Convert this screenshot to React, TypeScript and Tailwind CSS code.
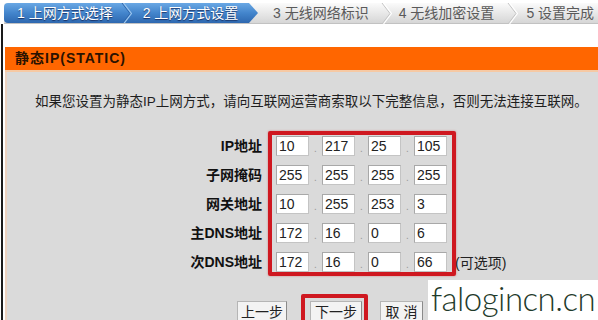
import React from "react";

const Chevron = ({ light, dark }: { light: string; dark: string }) => (
  <svg width="11" height="21" viewBox="0 0 11 21" className="shrink-0">
    <polyline points="1,0 9,10.5 1,21" fill="none" stroke={dark} strokeWidth="1" />
    <polyline points="2.5,0 10.5,10.5 2.5,21" fill="none" stroke={light} strokeWidth="1.2" />
  </svg>
);

const Field = ({ v }: { v: string }) => (
  <div className="w-[33px] h-[20px] bg-white border border-[#c4c4c4] border-t-[#a8a8a8] border-l-[#a8a8a8] pl-[2px] text-[14px] leading-[18px] text-[#222] font-['Liberation_Sans',sans-serif]">
    {v}
  </div>
);

const Dot = () => (
  <div className="w-[13px] h-[20px] flex items-end justify-center pb-[2px] text-[10px] leading-[10px] text-[#999]">.</div>
);

const rows: { label: string; vals: string[] }[] = [
  { label: "IP地址", vals: ["10", "217", "25", "105"] },
  { label: "子网掩码", vals: ["255", "255", "255", "255"] },
  { label: "网关地址", vals: ["10", "255", "253", "3"] },
  { label: "主DNS地址", vals: ["172", "16", "0", "6"] },
  { label: "次DNS地址", vals: ["172", "16", "0", "66"] },
];

const Btn = ({ t, w, cls = "" }: { t: string; w: string; cls?: string }) => (
  <div
    className={`${w} ${cls} h-[22px] shrink-0 bg-[#f3f3f3] border border-[#8a8a8a] border-t-[#b5b5b5] border-l-[#b5b5b5] text-[14px] leading-[20px] text-center text-[#222] whitespace-nowrap`}
  >
    {t}
  </div>
);

export default function App() {
  return (
    <div className="relative w-[598px] h-[320px] overflow-hidden bg-white font-['Liberation_Sans','Noto_Sans_CJK_SC',sans-serif] flex flex-col">
      {/* step bar */}
      <div className="mt-[3px] ml-[4px] h-[21px] flex items-stretch bg-gradient-to-b from-[#fbfbfb] to-[#d6d6d6] border-b border-[#c2c2c2] text-[14px] leading-[21px] whitespace-nowrap shrink-0">
        <div className="w-[254px] shrink-0 rounded-l-[4px] bg-gradient-to-b from-[#6aa8e4] via-[#4385cc] to-[#2e68b0] [clip-path:polygon(0_0,245px_0,254px_50%,245px_100%,0_100%)] flex items-center text-white [text-shadow:0_1px_1px_rgba(0,0,40,0.6)]">
          <span className="ml-[13px] shrink-0">1 上网方式选择</span>
          <span className="ml-[8px] flex">
            <Chevron light="#9cc6ee" dark="#2f66aa" />
          </span>
          <span className="ml-[11px] shrink-0">2 上网方式设置</span>
        </div>
        <div className="flex items-center text-[#5a5a5a]">
          <span className="ml-[15px] shrink-0">3 无线网络标识</span>
          <span className="ml-[12px] flex">
            <Chevron light="#ffffff" dark="#c4c4c4" />
          </span>
          <span className="ml-[7px] shrink-0">4 无线加密设置</span>
          <span className="ml-[13px] flex">
            <Chevron light="#ffffff" dark="#c4c4c4" />
          </span>
          <span className="ml-[8px] shrink-0">5 设置完成</span>
        </div>
      </div>

      {/* main */}
      <div className="flex-1 ml-[1px] border-l-[2px] border-[#1a1a1a] pl-[2px] flex flex-col">
        <div className="h-[23px] shrink-0" />
        <div className="h-[25px] shrink-0 bg-[#ff6600] border-b-[2px] border-[#f6c9a4] pl-[10px] flex items-center text-[14px] font-bold tracking-[1px] text-[#2a1200]">
          静态IP(STATIC)
        </div>
        <div className="flex-1 bg-[#dadada] border-l-[2px] border-[#ecd2c0] flex flex-col">
          <div className="pt-[22px] pl-[28px] text-[13.5px] leading-[16px] text-[#1e1e1e] whitespace-nowrap">
            如果您设置为静态IP上网方式，请向互联网运营商索取以下完整信息，否则无法连接互联网。
          </div>

          <div className="mt-[21px] flex items-stretch">
            <div className="w-[255px] shrink-0 pt-[5px] flex flex-col gap-[9px] items-end">
              {rows.map((r) => (
                <div key={r.label} className="h-[20px] leading-[20px] text-[14px] font-bold text-[#111]">
                  {r.label}
                </div>
              ))}
            </div>
            <div className="ml-[6px] shrink-0 border-[4px] border-[#cf1820] rounded-[2px] pt-[1px] pl-[4px] pr-[5px] flex flex-col gap-[9px] shadow-[0_0_2px_rgba(200,30,30,0.5)]">
              {rows.map((r) => (
                <div key={r.label} className="flex">
                  <Field v={r.vals[0]} />
                  <Dot />
                  <Field v={r.vals[1]} />
                  <Dot />
                  <Field v={r.vals[2]} />
                  <Dot />
                  <Field v={r.vals[3]} />
                </div>
              ))}
            </div>
            <div className="flex flex-col justify-end pb-[3px]">
              <div className="h-[20px] leading-[20px] text-[14px] text-[#222] whitespace-nowrap -ml-[1px]">(可选项)</div>
            </div>
          </div>

          <div className="mt-[18px] ml-[230px] flex items-start">
            <Btn t="上一步" w="w-[50px]" cls="mt-[7px]" />
            <div className="ml-[14px] border-[4px] border-[#cf1820] rounded-[2px] pt-[3px] pl-[5px] pr-[2px] pb-[4px] shrink-0">
              <Btn t="下一步" w="w-[52px]" />
            </div>
            <Btn t="取 消" w="w-[43px]" cls="mt-[7px] ml-[12px]" />
          </div>
        </div>
      </div>

      {/* watermark overlay */}
      <div className="absolute left-[428px] top-[280px] w-[170px] h-[40px] bg-white">
        <div className="ml-[3px] -mt-[2px] text-[33px] leading-[40px] font-light font-['Lato','DejaVu_Sans',sans-serif] text-[#1f3b2b] tracking-[-0.5px] whitespace-nowrap">
          falogincn.cn
        </div>
      </div>
    </div>
  );
}
